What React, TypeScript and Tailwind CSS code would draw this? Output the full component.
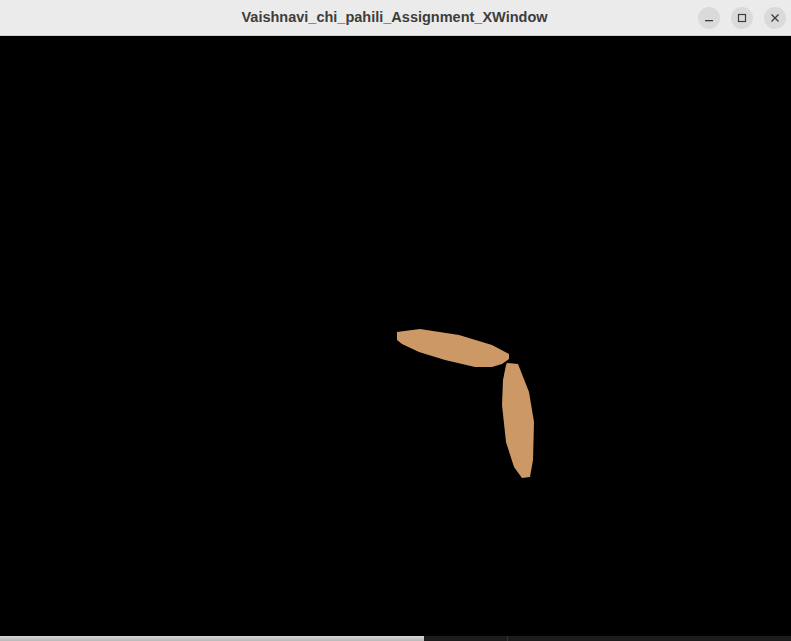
import React from "react";

const petals = [
  "397,296 420,293 459,299 492,309 509,318 509,323 502,328 492,331 475,331 445,324 419,316 402,308 397,304",
  "507,327 518,328 529,356 534,386 533,424 530,441 522,442 514,431 506,406 502,369 503,344 506,329",
];

function TitleButton({ children }: { children: React.ReactNode }) {
  return (
    <div className="w-[22px] h-[22px] rounded-full bg-[#dadada] flex items-center justify-center text-[#3d3d3d]">
      {children}
    </div>
  );
}

export default function App() {
  return (
    <div className="w-[791px] h-[641px] flex flex-col bg-black overflow-hidden">
      {/* title bar */}
      <div className="h-[36px] shrink-0 bg-[#ebebeb] border-b border-[#cfcfcf] flex items-center relative">
        <div className="flex-1 text-center font-['Liberation_Sans',sans-serif] font-bold text-[14.5px] text-[#3d3d3d] pr-[2px]">
          Vaishnavi_chi_pahili_Assignment_XWindow
        </div>
        <div className="absolute right-[5px] top-[7px] flex gap-[11px]">
          <TitleButton>
            <svg width="10" height="10" viewBox="0 0 10 10">
              <rect x="1" y="7" width="8" height="1.3" fill="currentColor" />
            </svg>
          </TitleButton>
          <TitleButton>
            <svg width="10" height="10" viewBox="0 0 10 10">
              <rect x="1.5" y="1.5" width="7" height="7" fill="none" stroke="currentColor" strokeWidth="1.2" />
            </svg>
          </TitleButton>
          <TitleButton>
            <svg width="10" height="10" viewBox="0 0 10 10">
              <path d="M1.5 1.5 L8.5 8.5 M8.5 1.5 L1.5 8.5" stroke="currentColor" strokeWidth="1.3" />
            </svg>
          </TitleButton>
        </div>
      </div>

      {/* drawing area */}
      <div className="flex-1 bg-black">
        <svg width="791" height="600" viewBox="0 0 791 600" className="block">
          {petals.map((p, i) => (
            <polygon key={i} points={p} fill="#cc9966" />
          ))}
        </svg>
      </div>

      {/* bottom edge */}
      <div className="h-[5px] shrink-0 flex">
        <div className="w-[424px] bg-gradient-to-b from-[#d8d8d8] to-[#b8b8b8]" />
        <div className="w-[84px] bg-[#1c1c1c] border-r border-[#333]" />
        <div className="flex-1 bg-[#1c1c1c]" />
      </div>
    </div>
  );
}
